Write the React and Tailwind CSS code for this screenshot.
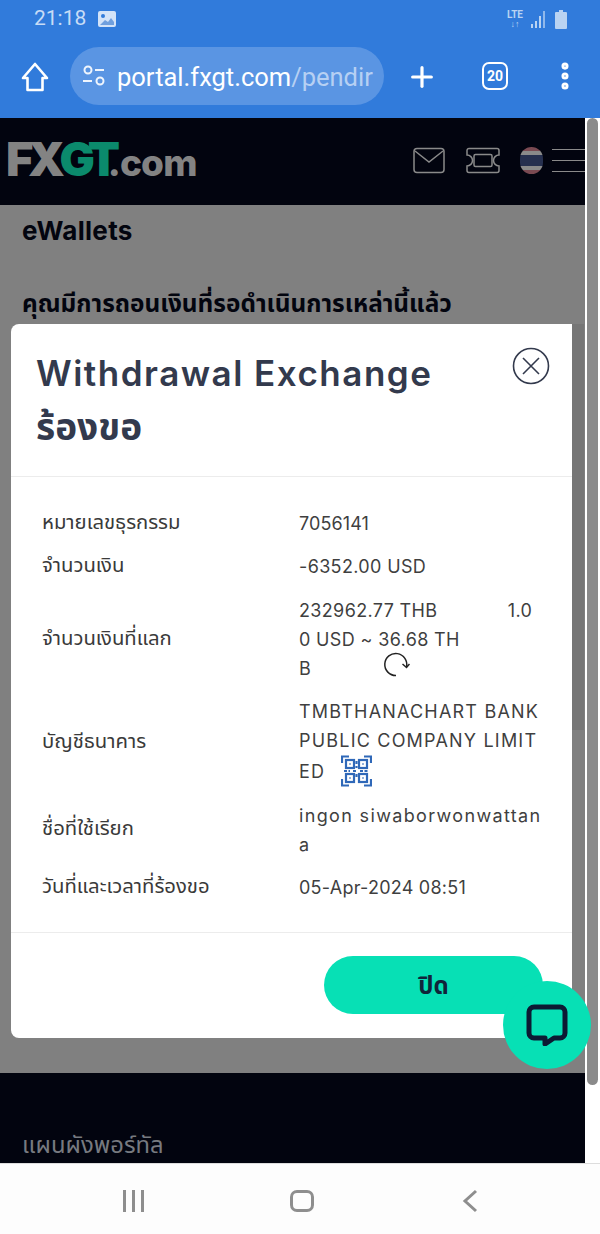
import React from 'react';
import { Plus, EllipsisVertical } from 'lucide-react';

const thai = { fontFamily: '"Noto Sans", "Noto Sans Thai", "Liberation Sans", sans-serif' };
const latin = { fontFamily: 'Inter, "Noto Sans", "Noto Sans Thai", sans-serif' };

const rows = [
    { label: 'หมายเลขธุรกรรม', lines: ['7056141'], h: 'h-[43px]', track: 'tracking-[0.1px]' },
    { label: 'จำนวนเงิน', lines: ['-6352.00 USD'], h: 'h-[43px]', track: 'tracking-[0.35px]' },
    {
        label: 'จำนวนเงินที่แลก',
        lines: ['232962.77 THB\u00a0\u00a0\u00a0\u00a0\u00a0\u00a0\u00a0\u00a0\u00a0\u00a0\u00a0\u00a0\u00a01.0', '0 USD ~ 36.68 TH', 'B'],
        h: 'h-[103px]',
        track: 'tracking-[0.35px]',
        icon: 'refresh',
    },
    {
        label: 'บัญชีธนาคาร',
        lines: ['TMBTHANACHART BANK', 'PUBLIC COMPANY LIMIT', 'ED'],
        h: 'h-[103px]',
        track: 'tracking-[1.2px]',
        icon: 'qr',
    },
    { label: 'ชื่อที่ใช้เรียก', lines: ['ingon siwaborwonwattan', 'a'], h: 'h-[72px]', track: 'tracking-[1.35px]' },
    { label: 'วันที่และเวลาที่ร้องขอ', lines: ['05-Apr-2024 08:51'], h: 'h-[43px]', track: 'tracking-[0.25px]' },
];

const RefreshIcon = () => (
    <svg width="27" height="25" viewBox="0 0 27 25" fill="none" stroke="#222" strokeWidth="1.5" className="ml-[72px] -mt-[7px]">
        <path d="M13 23.500A11 11 0 1 1 23.500 15" />
        <path d="M19.500 12l4 3.500 3-3.500" />
    </svg>
);

const QrIcon = () => (
    <svg width="31" height="32" viewBox="0 0 31 32" fill="none" stroke="#2f68b8" strokeWidth="2.2" className="ml-[16px]">
        <path d="M1 8V1.500h7M23 1.500h7V8M1 24v6.500h7M30 24v6.500h-7" />
        <rect x="5" y="5" width="8" height="8" />
        <rect x="18" y="5" width="8" height="8" />
        <rect x="5" y="19" width="8" height="8" />
        <rect x="18" y="19" width="8" height="8" />
        <path d="M8.500 9h1M21.500 9h1M8.500 23h1M21.500 23h1" />
        <path d="M3 16h6M12 16h3M15.500 6v3M15.500 11v2M15.500 19v4M19 16h9" strokeDasharray="3 1.500" />
    </svg>
);

const DetailRow = ({ row }) => (
    <div className={`grid grid-cols-[257px_1fr] items-center ${row.h}`}>
        <div className="pb-[5px] text-[20.300px] text-[#3a3a3a]" style={thai}>{row.label}</div>
        <div className={`pb-[1px] text-[18px] leading-[29px] text-[#3f3f3f] ${row.track}`} style={latin}>
            {row.lines.map((line, index) => (
                <div key={index} className="flex items-center whitespace-pre">
                    {line}
                    {index === row.lines.length - 1 && row.icon === 'refresh' && <RefreshIcon />}
                    {index === row.lines.length - 1 && row.icon === 'qr' && <QrIcon />}
                </div>
            ))}
        </div>
    </div>
);

const StatusBar = () => (
    <div className="flex h-[37px] items-center justify-between pl-[34px] pr-[33px] pt-[1px] text-[#c7dcf6]">
        <div className="flex items-center gap-[12px]">
            <span className="text-[21px]" style={{ fontFamily: 'Roboto, sans-serif' }}>21:18</span>
            <svg width="18" height="16" viewBox="0 0 18 16">
                <rect width="18" height="16" rx="2" fill="#d3e3f8" />
                <circle cx="5" cy="5" r="2" fill="#317bdb" />
                <path d="M2 14l5-5 3 2 3-4 3 4v3z" fill="#6f9fde" />
            </svg>
        </div>
        <div className="flex items-center gap-[8px] text-[#b9d3f2]">
            <div className="flex flex-col items-center text-[10px] font-bold leading-[10px]" style={{ fontFamily: 'Roboto, sans-serif' }}>
                <span>LTE</span>
                <span className="text-[9px] leading-[8px]">↓↑</span>
            </div>
            <svg width="16" height="17" viewBox="0 0 16 17" fill="#b9d3f2">
                <rect x="0" y="13" width="2" height="4" />
                <rect x="4" y="10" width="2" height="7" />
                <rect x="8" y="5" width="2" height="12" />
                <rect x="12" y="0" width="2" height="17" opacity=".7" />
            </svg>
            <svg width="12" height="19" viewBox="0 0 12 19" fill="#b9d3f2">
                <path d="M4 0h4v2h3a1 1 0 0 1 1 1v15a1 1 0 0 1-1 1H1a1 1 0 0 1-1-1V3a1 1 0 0 1 1-1h3z" />
            </svg>
        </div>
    </div>
);

const Toolbar = () => (
    <div className="flex h-[81px] items-start pl-[21px]">
        <svg width="28" height="30" viewBox="0 0 28 30" fill="none" stroke="#fff" strokeWidth="2.600" strokeLinejoin="round" className="mt-[25px]">
            <path d="M14 2L2 16h4.500v12h15V16H26z" />
        </svg>
        <div className="ml-[21px] mt-[10px] flex h-[58px] w-[314px] items-center overflow-hidden rounded-[29px] bg-[#5a95e3] pl-[12px] pr-[12px] text-[25.500px] text-white" style={{ fontFamily: 'Roboto, sans-serif' }}>
            <svg width="24" height="24" viewBox="0 0 24 24" fill="none" stroke="#fff" strokeWidth="2" className="mr-[11px] shrink-0 opacity-90">
                <circle cx="6" cy="6" r="3.500" />
                <path d="M13 6h9M1 17h9" />
                <circle cx="18" cy="17" r="3.500" />
            </svg>
            <span className="whitespace-nowrap pt-[2px]">portal.fxgt.com<span className="text-[#b6d0f3]">/pendir</span></span>
        </div>
        <Plus size={32} color="#fff" strokeWidth={2.400} className="ml-[22px] mt-[24px]" />
        <div className="ml-[44px] mt-[25px] flex h-[28px] w-[26px] items-center justify-center rounded-[7px] border-[2.500px] border-white text-[14px] font-bold text-white" style={{ fontFamily: 'Roboto, sans-serif' }}>20</div>
        <EllipsisVertical size={34} color="#fff" strokeWidth={3} className="ml-[40px] mt-[22px]" />
    </div>
);

const SiteHeader = () => (
    <div className="flex h-[87px] items-center bg-[#02040f] pb-[2px] pl-[6px]">
        <div className="flex items-baseline font-black" style={latin}>
            <span className="text-[47px] leading-[47px] tracking-[-5.500px] text-[#838383]">FX</span>
            <span className="text-[47px] leading-[47px] tracking-[-5.500px] text-[#0b8a6c]">GT</span>
            <span className="-ml-[7px] text-[37px] font-extrabold leading-[47px] tracking-[-0.800px] text-[#838383]">.com</span>
        </div>
        <div className="ml-auto flex items-center">
            <svg width="32" height="27" viewBox="0 0 32 27" fill="none" stroke="#8a8a8a" strokeWidth="1.500">
                <rect x="1" y="1.500" width="30" height="24" rx="3" />
                <path d="M2 4l14 11L30 4" />
            </svg>
            <svg width="36" height="27" viewBox="0 0 36 27" fill="none" stroke="#8a8a8a" strokeWidth="1.500" className="ml-[20px]">
                <path d="M4 1.500h28a2 2 0 0 1 2 2V8a5.500 5.500 0 0 0 0 11v4.500a2 2 0 0 1-2 2H4a2 2 0 0 1-2-2V19a5.500 5.500 0 0 0 0-11V3.500a2 2 0 0 1 2-2z" />
                <rect x="9" y="7.500" width="18" height="12" rx="1.500" />
            </svg>
            <div className="ml-[19px] flex h-[27px] w-[23px] flex-col overflow-hidden rounded-full">
                <div className="h-[4px] bg-[#7a4a52]" />
                <div className="h-[4px] bg-[#8a8a8a]" />
                <div className="h-[11px] bg-[#26304f]" />
                <div className="h-[4px] bg-[#8a8a8a]" />
                <div className="h-[4px] bg-[#7a4a52]" />
            </div>
            <div className="ml-[9px] flex w-[33px] flex-col gap-[10px]">
                <div className="h-[1px] bg-[#8a8a8a]" />
                <div className="h-[1px] bg-[#8a8a8a]" />
                <div className="h-[1px] bg-[#8a8a8a]" />
            </div>
        </div>
    </div>
);

const WithdrawalModal = () => (
    <div className="absolute left-[11px] top-[324px] flex h-[714px] w-[561px] flex-col rounded-l-[8px] bg-white">
        <div className="relative h-[153px] border-b border-[#ececec] pl-[25px] pt-[24px]">
            <h2 className="text-[35px] font-semibold leading-[50px] tracking-[1.500px] text-[#333a4d]" style={latin}>Withdrawal Exchange</h2>
            <h2 className="mt-[3px] text-[37px] font-bold leading-[50px] text-[#333a4d]" style={thai}>ร้องขอ</h2>
            <svg width="38" height="38" viewBox="0 0 38 38" fill="none" stroke="#333a4d" strokeWidth="1.600" className="absolute right-[22px] top-[23px]">
                <circle cx="19" cy="19" r="17.500" />
                <path d="M11 11l16 16M27 11L11 27" />
            </svg>
        </div>
        <div className="h-[456px] border-b border-[#ececec] pl-[31px] pt-[25px]">
            {rows.map((row) => <DetailRow key={row.label} row={row} />)}
        </div>
        <div className="flex flex-1 items-start pl-[313px] pt-[23px]">
            <button className="flex h-[58px] w-[219px] items-center justify-center rounded-[29px] bg-[#07e0b5] text-[24px] font-bold text-[#10253a]" style={thai}>ปิด</button>
        </div>
    </div>
);

export default function App() {
    return (
        <div className="relative flex h-[1234px] w-[600px] flex-col overflow-hidden bg-white">
            <div className="bg-[#317bdb]">
                <StatusBar />
                <Toolbar />
            </div>
            <div className="flex h-[1045px] w-[585px] flex-col">
                <SiteHeader />
                <div className="h-[868px] bg-[#808080] pl-[22px] pt-[8px]">
                    <div className="text-[26px] font-bold leading-[36px] tracking-[0.300px] text-[#03050f]" style={latin}>eWallets</div>
                    <div className="mt-[34px] text-[24.400px] font-bold leading-[40px] text-[#03050f]" style={thai}>คุณมีการถอนเงินที่รอดำเนินการเหล่านี้แล้ว</div>
                </div>
                <div className="flex h-[90px] items-end bg-[#02040f] pl-[22px] text-[23.800px] text-[#777a80]" style={thai}>แผนผังพอร์ทัล</div>
            </div>
            <div className="flex flex-1 items-center border-t border-[#dddddd] bg-[#fdfdfd] pt-[4px]">
                <div className="ml-[123px] flex gap-[6px]">
                    <div className="h-[22px] w-[3px] bg-[#8e8e8e]" />
                    <div className="h-[22px] w-[3px] bg-[#8e8e8e]" />
                    <div className="h-[22px] w-[3px] bg-[#8e8e8e]" />
                </div>
                <div className="ml-[146px] h-[22px] w-[24px] rounded-[7px] border-[3px] border-[#8e8e8e]" />
                <svg width="16" height="24" viewBox="0 0 16 24" fill="none" stroke="#8e8e8e" strokeWidth="3" className="ml-[148px]">
                    <path d="M14 2L3 12l11 10" />
                </svg>
            </div>

            <WithdrawalModal />

            {/* the dialog's own scrollbar next to the panel */}
            <div className="absolute left-[572px] top-[324px] h-[406px] w-[12px] bg-[#767676]" />

            {/* page scrollbar, sits over the rail on the right edge */}
            <div className="absolute left-[587px] top-[118px] h-[967px] w-[11px] rounded-full bg-[#8a8a8a]" />

            <div className="absolute left-[503px] top-[981px] flex h-[88px] w-[88px] items-center justify-center rounded-full bg-[#07e0b5]">
                <svg width="42" height="42" viewBox="0 0 42 42" fill="none">
                    <path d="M8 3h26a5 5 0 0 1 5 5v21a5 5 0 0 1-5 5h-6l-9 6v-6H8a5 5 0 0 1-5-5V8a5 5 0 0 1 5-5z" stroke="#0c1a33" strokeWidth="5" strokeLinejoin="round" />
                </svg>
            </div>
        </div>
    );
}
